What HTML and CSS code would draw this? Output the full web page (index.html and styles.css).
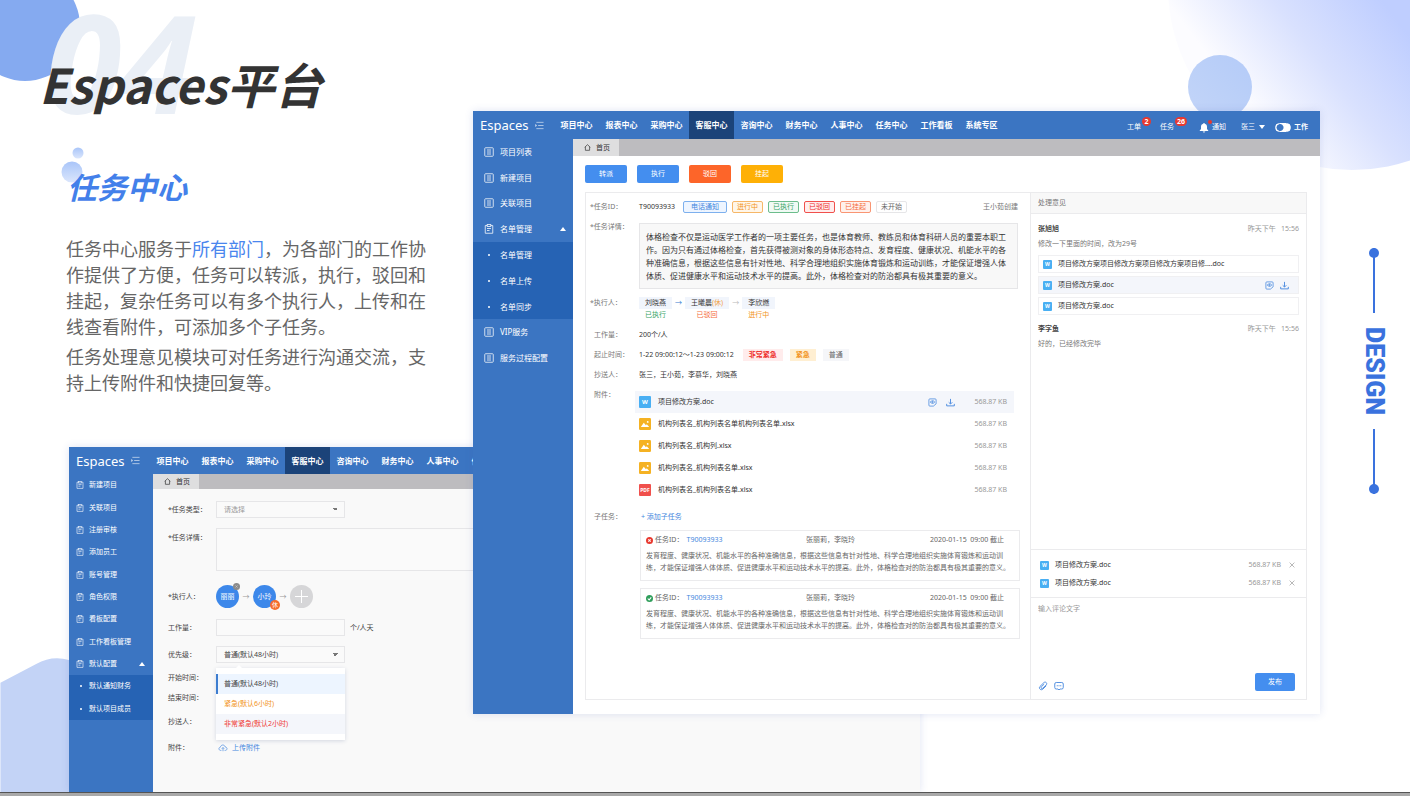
FILE: index.html
```html
<!DOCTYPE html>
<html lang="zh-CN">
<head>
<meta charset="utf-8">
<meta name="viewport" content="width=device-width, initial-scale=1">
<title>Espaces平台 - 任务中心</title>
<link rel="stylesheet" href="styles.css">
</head>
<body>
<svg class="sprite" aria-hidden="true">
  <symbol id="i-list" viewBox="0 0 20 20"><g fill="none" stroke="currentColor" stroke-width="1.8"><rect x="1.5" y="1.5" width="17" height="17" rx="1.5"/><path d="M6 6h8M6 10h8M6 14h8"/></g></symbol>
  <symbol id="i-board" viewBox="0 0 20 20"><g fill="none" stroke="currentColor" stroke-width="1.8"><path d="M6 3H2.500v15.500h15V3H14"/><rect x="6.500" y="1" width="7" height="4"/><path d="M6 9h8M6 13h5"/></g></symbol>
  <symbol id="i-fold" viewBox="0 0 20 20"><path d="M3 3h16M7 10h12M3 17h16M1 8l3 2-3 2z" fill="none" stroke="currentColor" stroke-width="1.800"/></symbol>
  <symbol id="i-home" viewBox="0 0 20 20"><path d="M2 9.500 10 2l8 7.500M4 8v10h12V8" fill="none" stroke="currentColor" stroke-width="2"/></symbol>
  <symbol id="i-bell" viewBox="0 0 20 20"><path d="M10 1c1 0 1.600.6 1.600 1.500C14.500 3.300 16 5.500 16 8.500V13l2.500 3v1h-17v-1L4 13V8.500c0-3 1.500-5.200 4.400-6C8.400 1.600 9 1 10 1zM7.500 18h5a2.500 2.200 0 0 1-5 0z" fill="currentColor"/></symbol>
  <symbol id="i-view" viewBox="0 0 20 20"><g fill="none" stroke="currentColor" stroke-width="1.700"><path d="M12 18H4a2 2 0 0 1-2-2V4a2 2 0 0 1 2-2h12a2 2 0 0 1 2 2v9z"/><path d="M5 9c2.500-4 7.500-4 10 0-2.500 4-7.500 4-10 0z"/><circle cx="10" cy="9" r="1.300"/></g></symbol>
  <symbol id="i-down" viewBox="0 0 20 20"><path d="M10 2v11M6 9.500l4 4 4-4M1.500 13v4.500h17V13" fill="none" stroke="currentColor" stroke-width="2"/></symbol>
  <symbol id="i-photo" viewBox="0 0 20 20"><rect width="20" height="20" rx="2" fill="#f5b223"/><path d="M3 15l5-7 3.500 4L13 10.500l4 4.500z" fill="#fff"/><circle cx="14.500" cy="6.500" r="1.500" fill="#fff"/></symbol>
  <symbol id="i-no" viewBox="0 0 20 20"><circle cx="10" cy="10" r="10" fill="#e8392f"/><path d="M6.500 6.500l7 7M13.500 6.500l-7 7" stroke="#fff" stroke-width="3"/></symbol>
  <symbol id="i-ok" viewBox="0 0 20 20"><circle cx="10" cy="10" r="10" fill="#2f9e5b"/><path d="M5 10l4 4 6-7" fill="none" stroke="#fff" stroke-width="3"/></symbol>
  <symbol id="i-x" viewBox="0 0 20 20"><path d="M2 2l16 16M18 2L2 18" stroke="currentColor" stroke-width="2"/></symbol>
  <symbol id="i-clip" viewBox="0 0 20 20"><path d="M16.500 9.500l-6.800 6.800c-3.900 3.600-9.300-1.600-5.700-5.400l7.800-7.700c3.400-2.900 7.600 1.400 4.700 4.600l-7 6.800c-2.300 1.700-4.600-.8-2.800-2.900l5.600-5.500" fill="none" stroke="currentColor" stroke-width="1.800"/></symbol>
  <symbol id="i-chat" viewBox="0 0 20 20"><path d="M4.500 3h11Q18.500 3 18.500 6v7q0 3-3 3H12l-2 2-2-2H4.500q-3 0-3-3V6q0-3 3-3z" fill="none" stroke="currentColor" stroke-width="1.800"/><path d="M5.500 9.500h2M9 9.500h2M12.500 9.500h2" stroke="currentColor" stroke-width="2"/></symbol>
  <symbol id="i-cloud" viewBox="0 0 24 20"><path d="M8 16H6C.5 15.500.5 8.500 5.500 8 6.500 1 16 .5 17.500 7.500c6 .5 6 8 .5 8.500h-2M12 18V9M8.800 12 12 8.800l3.200 3.200" fill="none" stroke="currentColor" stroke-width="1.700"/></symbol>
</svg>

<main class="slide">
  <svg class="decor decor-tl" viewBox="0 0 80 82" aria-hidden="true"><circle cx="25" cy="26" r="55" fill="#85aaf0"/></svg>
  <svg class="decor decor-tr" viewBox="0 0 242 172" aria-hidden="true">
    <defs><linearGradient id="sky" gradientUnits="userSpaceOnUse" x1="225" y1="15" x2="90" y2="120"><stop offset="0" stop-color="#bfceff"/><stop offset="0.500" stop-color="#d9e1fe"/><stop offset="1" stop-color="#fcfcff"/></linearGradient>
    <linearGradient id="ball" x1="1" y1="0" x2="0" y2="1"><stop offset="0" stop-color="#b4cbf8"/><stop offset="1" stop-color="#c3d5f8"/></linearGradient></defs>
    <circle cx="184" cy="-14" r="184" fill="url(#sky)"/>
    <circle cx="52" cy="87" r="32" fill="url(#ball)"/>
  </svg>
  <svg class="decor decor-bl" viewBox="0 0 120 136" aria-hidden="true"><path d="M0 25 36 6Q52-3 69 2L120 20V136H0z" fill="#c3d3f6"/></svg>
  <span class="big-number" aria-hidden="true">04</span>

  <section class="intro">
    <h1 class="intro-title">Espaces平台</h1>
    <h2 class="intro-sub">
      <svg class="bubbles" viewBox="0 0 24 36" aria-hidden="true"><defs><linearGradient id="bub" x1="0" y1="0" x2="0" y2="1"><stop offset="0" stop-color="#a9c5f9"/><stop offset="1" stop-color="#dbe6fc"/></linearGradient></defs><circle cx="17" cy="6" r="5.500" fill="url(#bub)"/><circle cx="11" cy="25" r="10.500" fill="url(#bub)"/></svg>
      <span class="intro-sub-text">任务中心</span>
    </h2>
    <p class="intro-text">任务中心服务于<em class="intro-key">所有部门</em>，为各部门的工作协作提供了方便，任务可以转派，执行，驳回和挂起，复杂任务可以有多个执行人，上传和在线查看附件，可添加多个子任务。</p>
    <p class="intro-text">任务处理意见模块可对任务进行沟通交流，支持上传附件和快捷回复等。</p>
  </section>

  <section class="window window-form">
    <header class="topbar">
      <span class="logo">Espaces</span><svg class="fold"><use href="#i-fold"/></svg>
      <nav class="topnav"><a href="#">项目中心</a><a href="#">报表中心</a><a href="#">采购中心</a><a href="#" class="active">客服中心</a><a href="#">咨询中心</a><a href="#">财务中心</a><a href="#">人事中心</a><a href="#">任务中心</a></nav>
    </header>
    <div class="window-body">
      <nav class="sidebar"><ul class="side-list">
        <li><a href="#"><svg class="ico"><use href="#i-board"/></svg>新建项目</a></li>
        <li><a href="#"><svg class="ico"><use href="#i-board"/></svg>关联项目</a></li>
        <li><a href="#"><svg class="ico"><use href="#i-board"/></svg>注册审核</a></li>
        <li><a href="#"><svg class="ico"><use href="#i-board"/></svg>添加员工</a></li>
        <li><a href="#"><svg class="ico"><use href="#i-board"/></svg>账号管理</a></li>
        <li><a href="#"><svg class="ico"><use href="#i-board"/></svg>角色权限</a></li>
        <li><a href="#"><svg class="ico"><use href="#i-board"/></svg>看板配置</a></li>
        <li><a href="#"><svg class="ico"><use href="#i-board"/></svg>工作看板管理</a></li>
        <li><a href="#"><svg class="ico"><use href="#i-board"/></svg>默认配置<i class="tri-up"></i></a></li>
        <li class="sub"><a href="#"><i class="dot"></i>默认通知财务</a></li>
        <li class="sub"><a href="#"><i class="dot"></i>默认项目成员</a></li>
      </ul></nav>
      <div class="content">
        <div class="tabs"><a href="#" class="tab"><svg class="home"><use href="#i-home"/></svg>首页</a></div>
        <form class="form">
          <div class="field"><label for="type">*任务类型：</label><select id="type" class="box muted"><option>请选择</option></select></div>
          <div class="field field-top"><label for="detail">*任务详情：</label><textarea id="detail" class="box area"></textarea></div>
          <div class="field field-people"><span class="field-name">*执行人：</span>
            <span class="avatar">丽丽<i class="avatar-close"><svg><use href="#i-x"/></svg></i></span><i class="arrow">→</i>
            <span class="avatar">小玲<i class="avatar-rest">休</i></span><i class="arrow">→</i>
            <button type="button" class="avatar avatar-add" aria-label="添加执行人"></button></div>
          <div class="field"><label for="amount">工作量：</label><input id="amount" class="box" type="text"><span class="unit">个/人天</span></div>
          <div class="field field-level"><label for="level">优先级：</label>
            <div class="picker"><select id="level" class="box"><option>普通(默认48小时)</option></select>
              <ul class="menu"><li class="chosen">普通(默认48小时)</li><li class="warn">紧急(默认6小时)</li><li class="danger">非常紧急(默认2小时)</li></ul></div></div>
          <div class="field field-line"><span class="field-name">开始时间：</span></div>
          <div class="field field-line"><span class="field-name">结束时间：</span></div>
          <div class="field field-wide"><span class="field-name">抄送人：</span></div>
          <div class="field field-wide"><span class="field-name">附件：</span><a href="#" class="upload"><svg><use href="#i-cloud"/></svg>上传附件</a></div>
        </form>
      </div>
    </div>
  </section>

  <section class="window window-task">
    <header class="topbar">
      <span class="logo">Espaces</span><svg class="fold"><use href="#i-fold"/></svg>
      <nav class="topnav"><a href="#">项目中心</a><a href="#">报表中心</a><a href="#">采购中心</a><a href="#" class="active">客服中心</a><a href="#">咨询中心</a><a href="#">财务中心</a><a href="#">人事中心</a><a href="#">任务中心</a><a href="#">工作看板</a><a href="#">系统专区</a></nav>
      <div class="account">
        <a href="#" class="counter">工单<b class="badge">2</b></a>
        <a href="#" class="counter">任务<b class="badge">26</b></a>
        <a href="#" class="notice"><svg><use href="#i-bell"/></svg>通知<i class="red-dot"></i></a>
        <a href="#" class="user">张三<i class="tri-down"></i></a>
        <label class="switch"><input type="checkbox">工作</label>
      </div>
    </header>
    <div class="window-body">
      <nav class="sidebar"><ul class="side-list">
        <li><a href="#"><svg class="ico"><use href="#i-list"/></svg>项目列表</a></li>
        <li><a href="#"><svg class="ico"><use href="#i-list"/></svg>新建项目</a></li>
        <li><a href="#"><svg class="ico"><use href="#i-list"/></svg>关联项目</a></li>
        <li><a href="#"><svg class="ico"><use href="#i-board"/></svg>名单管理<i class="tri-up"></i></a></li>
        <li class="sub"><a href="#"><i class="dot"></i>名单管理</a></li>
        <li class="sub"><a href="#"><i class="dot"></i>名单上传</a></li>
        <li class="sub"><a href="#"><i class="dot"></i>名单同步</a></li>
        <li><a href="#"><svg class="ico"><use href="#i-list"/></svg>VIP服务</a></li>
        <li><a href="#"><svg class="ico"><use href="#i-list"/></svg>服务过程配置</a></li>
      </ul></nav>
      <div class="content">
        <div class="tabs"><a href="#" class="tab"><svg class="home"><use href="#i-home"/></svg>首页</a></div>
        <div class="actions"><button class="btn">转派</button><button class="btn">执行</button><button class="btn btn-red">驳回</button><button class="btn btn-amber">挂起</button></div>
        <div class="panel">
          <div class="task">
            <div class="row"><span class="name star">*任务ID：</span><div class="value line">
              <span class="task-id">T90093933</span><span class="tag tag-blue">电话通知</span><span class="tag tag-orange">进行中</span><span class="tag tag-green">已执行</span><span class="tag tag-red">已驳回</span><span class="tag tag-coral">已挂起</span><span class="tag">未开始</span><span class="creator">王小茹创建</span></div></div>
            <div class="row"><span class="name star">*任务详情：</span><div class="value"><p class="detail">体格检查不仅是运动医学工作者的一项主要任务，也是体育教师、教练员和体育科研人员的重要本职工作。因为只有通过体格检查，首先获得被测对象的身体形态特点、发育程度、健康状况、机能水平的各种准确信息，根据这些信息有针对性地、科学合理地组织实施体育锻炼和运动训练，才能保证增强人体体质、促进健康水平和运动技术水平的提高。此外，体格检查对的防治都具有极其重要的意义。</p></div></div>
            <div class="row"><span class="name star">*执行人：</span><div class="value line">
              <span class="person"><b>刘晓燕</b><i class="green">已执行</i></span><i class="step step-on">→</i>
              <span class="person"><b>王曦晨<em>(休)</em></b><i class="coral">已驳回</i></span><i class="step">→</i>
              <span class="person"><b>李欣燃</b><i class="orange">进行中</i></span></div></div>
            <div class="row"><span class="name">工作量：</span><div class="value">200个/人</div></div>
            <div class="row"><span class="name">起止时间：</span><div class="value line"><span class="period">1-22 09:00:12～1-23 09:00:12</span><span class="level level-red">非常紧急</span><span class="level level-orange">紧急</span><span class="level">普通</span></div></div>
            <div class="row"><span class="name">抄送人：</span><div class="value">张三，王小茹，李慕华，刘晓燕</div></div>
            <div class="row"><span class="name">附件：</span><ul class="value files">
              <li class="hot"><i class="doc doc-w">W</i><span>项目修改方案.doc</span><svg class="act"><use href="#i-view"/></svg><svg class="act"><use href="#i-down"/></svg><span class="size">568.87 KB</span></li>
              <li><svg class="doc"><use href="#i-photo"/></svg><span>机构列表名_机构列表名单机构列表名单.xlsx</span><span class="size">568.87 KB</span></li>
              <li><svg class="doc"><use href="#i-photo"/></svg><span>机构列表名_机构列.xlsx</span><span class="size">568.87 KB</span></li>
              <li><svg class="doc"><use href="#i-photo"/></svg><span>机构列表名_机构列表名单.xlsx</span><span class="size">568.87 KB</span></li>
              <li><i class="doc doc-pdf">PDF</i><span>机构列表名_机构列表名单.xlsx</span><span class="size">568.87 KB</span></li>
            </ul></div>
            <div class="row"><span class="name">子任务：</span><div class="value">
              <a href="#" class="add">+ 添加子任务</a>
              <article class="card"><header><svg><use href="#i-no"/></svg><span>任务ID：</span><a href="#">T90093933</a><span class="who">张丽莉，李晓玲</span><time>2020-01-15&nbsp; 09:00 截止</time></header>
                <p>发育程度、健康状况、机能水平的各种准确信息，根据这些信息有针对性地、科学合理地组织实施体育锻炼和运动训<br>练，才能保证增强人体体质、促进健康水平和运动技术水平的提高。此外，体格检查对的防治都具有极其重要的意义。</p></article>
              <article class="card"><header><svg><use href="#i-ok"/></svg><span>任务ID：</span><a href="#">T90093933</a><span class="who">张丽莉，李晓玲</span><time>2020-01-15&nbsp; 09:00 截止</time></header>
                <p>发育程度、健康状况、机能水平的各种准确信息，根据这些信息有针对性地、科学合理地组织实施体育锻炼和运动训<br>练，才能保证增强人体体质、促进健康水平和运动技术水平的提高。此外，体格检查对的防治都具有极其重要的意义。</p></article>
            </div></div>
          </div>
          <aside class="opinion">
            <h3 class="opinion-title">处理意见</h3>
            <div class="messages">
              <article class="message"><header><b>张旭旭</b><time>昨天下午&nbsp;&nbsp; 15:56</time></header><p>修改一下里面的时间，改为29号</p>
                <ul class="docs"><li><i class="doc-s">W</i>项目修改方案项目修改方案项目修改方案项目修....doc</li>
                <li class="hot"><i class="doc-s">W</i>项目修改方案.doc<span class="acts"><svg class="act"><use href="#i-view"/></svg><svg class="act"><use href="#i-down"/></svg></span></li>
                <li><i class="doc-s">W</i>项目修改方案.doc</li></ul></article>
              <article class="message"><header><b>李字鱼</b><time>昨天下午&nbsp;&nbsp; 15:56</time></header><p>好的，已经修改完毕</p></article>
            </div>
            <ul class="pending">
              <li><i class="doc-s">W</i>项目修改方案.doc<span class="size">568.87 KB</span><button aria-label="移除"><svg><use href="#i-x"/></svg></button></li>
              <li><i class="doc-s">W</i>项目修改方案.doc<span class="size">568.87 KB</span><button aria-label="移除"><svg><use href="#i-x"/></svg></button></li>
            </ul>
            <div class="reply">
              <textarea placeholder="输入评论文字" aria-label="输入评论文字"></textarea>
              <div class="reply-bar"><svg><use href="#i-clip"/></svg><svg><use href="#i-chat"/></svg><button class="btn btn-send">发布</button></div>
            </div>
          </aside>
        </div>
      </div>
    </div>
  </section>

  <div class="rail"><span class="rail-line rail-start"></span><span class="rail-text">DESIGN</span><span class="rail-line rail-end"></span></div>
</main>
</body>
</html>
```
FILE: styles.css
```css
* { box-sizing: border-box; }
body { margin: 0; background: #fff; color: #555; font-family: "Noto Sans", "Noto Sans CJK SC", sans-serif; }
ul, p, h1, h2, h3 { margin: 0; padding: 0; font-weight: 400; }
ul { list-style: none; }
a { color: inherit; text-decoration: none; }
i, em { font-style: normal; }
button, input, select, textarea { font: inherit; color: inherit; margin: 0; }
button { border: 0; padding: 0; background: none; cursor: pointer; }
svg { flex: none; }
.sprite { position: absolute; width: 0; height: 0; }

.slide { position: relative; min-height: 100vh; overflow: hidden; border-bottom: 3px solid #a9a9a9; background: #fff; }
.slide::after { content: ""; position: absolute; left: 0; right: 0; bottom: 0; height: 1px; background: #555; }
.decor { position: absolute; }
.decor-tl { left: 0; top: 0; width: 80px; height: 82px; }
.decor-tr { right: 0; top: 0; width: 242px; height: 172px; }
.decor-bl { left: 0; bottom: 0; width: 120px; height: 135px; }
.big-number { position: absolute; left: 46px; top: 12px; font: italic 700 137px/98px "Noto Sans", sans-serif; color: #eaeff6; }

.intro { position: relative; width: 428px; padding: 50px 0 0 39px; }
.intro-title { font: italic 700 48px/66px "Noto Sans CJK SC", sans-serif; color: #333; white-space: nowrap; }
.intro-sub { position: relative; margin-top: 48px; padding-left: 28px; font: italic 700 30px/44px "Noto Sans CJK SC", sans-serif; color: #4380ea; }
.bubbles { position: absolute; left: 22px; top: -17px; width: 24px; height: 36px; }
.intro-sub-text { position: relative; }
.intro-text { margin: 0 0 4px 27px; font: 400 18px/26px "Noto Sans CJK SC", sans-serif; color: #666; }
.intro-sub + .intro-text { margin-top: 27px; }
.intro-key { color: #4a86ee; }

.window { position: absolute; display: flex; flex-direction: column; background: #fff; box-shadow: 0 0 8px rgba(60, 90, 180, 0.160); font-size: 7px; line-height: 12px; }
.window-form { left: 69px; right: 490px; top: 447px; bottom: 1px; background: #f9f9f9; }
.window-task { left: 473px; right: 90px; top: 111px; }
.topbar { display: flex; align-items: center; height: 28px; flex: none; padding-left: 7px; background: #3b75c2; color: #fff; }
.window-form .topbar { height: 27px; overflow: hidden; }
.logo { width: 48px; font-size: 13px; line-height: 20px; }
.fold { width: 9px; height: 9px; margin-left: 7px; opacity: 0.700; }
.topnav { display: flex; align-self: stretch; margin-left: 10px; }
.topnav a { display: flex; align-items: center; justify-content: center; width: 45px; font-size: 8px; font-weight: 700; white-space: nowrap; }
.topnav .active { background: #1b4379; }
.account { display: flex; align-items: center; margin: 4px 12px 0 auto; white-space: nowrap; }
.counter { position: relative; margin-right: 19px; }
.badge { position: absolute; left: 15px; top: -4px; min-width: 9px; padding: 0 2px; border-radius: 5px; background: #e8392f; font-size: 7px; line-height: 9px; text-align: center; }
.notice { position: relative; display: flex; align-items: center; gap: 3px; margin: 0 15px 0 6px; }
.notice svg { width: 10px; height: 11px; }
.red-dot { position: absolute; left: 9px; top: -1px; width: 4px; height: 4px; border-radius: 50%; background: #e8392f; }
.user { display: flex; align-items: center; gap: 4px; margin-right: 10px; }
.tri-down { border: 3px solid transparent; border-top: 4px solid currentColor; border-bottom: 0; }
.tri-up { margin-left: auto; border: 3px solid transparent; border-bottom: 4px solid currentColor; border-top: 0; }
.switch { display: flex; align-items: center; gap: 3px; font-weight: 700; }
.switch input { appearance: none; width: 16px; height: 9px; border: 1px solid #fff; border-radius: 5px; background: radial-gradient(circle at 4px 50%, #3b75c2 3px, #fff 4px); }

.window-body { display: flex; flex: 1; }
.sidebar { width: 100px; flex: none; background: #3b75c2; color: #fff; font-size: 8px; }
.side-list { display: grid; grid-auto-rows: 1fr; height: 232px; }
.sidebar a { display: flex; align-items: center; height: 100%; padding: 0 7px 0 11px; white-space: nowrap; }
.ico { width: 10px; height: 10px; margin-right: 6px; opacity: 0.850; }
.sub { background: #2663b4; }
.dot { width: 2px; height: 2px; margin: 0 10px 0 4px; border-radius: 50%; background: #fff; }
.window-form .sidebar { width: 84px; font-size: 7px; }
.window-form .side-list { height: 246px; }
.window-form .sidebar a { padding: 0 8px 0 7px; }
.window-form .ico { width: 8px; height: 8px; margin-right: 5px; }
.window-form .dot { margin: 0 7px 0 4px; }
.content { flex: 1; min-width: 0; }
.tabs { display: flex; height: 17px; background: #bdbcbf; }
.window-form .tabs { height: 15px; }
.tab { display: flex; align-items: center; gap: 5px; width: 46px; padding-left: 11px; background: #dededf; color: #333; }
.home { width: 7px; height: 7px; }

.form { padding: 12px 0 0 15px; color: #444; }
.field { display: flex; align-items: center; margin-bottom: 10px; }
.field label, .field-name { width: 48px; flex: none; }
.box { width: 129px; height: 17px; padding: 0 8px; border: 1px solid #e6e6e8; border-radius: 0; background: #fafafa; outline: 0; }
select.box { display: block; appearance: none; padding: 0 7px; background: linear-gradient(to top right, transparent 50%, #777 50%) 115px 6px / 3px 3px no-repeat, linear-gradient(to top left, transparent 50%, #777 50%) 118px 6px / 3px 3px no-repeat #fafafa; }
select.muted { color: #999; }
.field-top { align-items: flex-start; }
.field-top label { padding-top: 4px; }
.area { width: auto; flex: 1; height: 43px; resize: none; }
.field-people { margin: 14px 0 11px; }
.avatar { position: relative; display: flex; align-items: center; justify-content: center; width: 23px; height: 23px; border-radius: 50%; background: #3d88ea; color: #fff; }
.avatar-close { position: absolute; right: -1px; top: -2px; display: flex; align-items: center; justify-content: center; width: 7px; height: 7px; border-radius: 50%; background: #8b8b8b; }
.avatar-close svg { width: 3px; height: 3px; }
.avatar-rest { position: absolute; right: -4px; bottom: -2px; width: 10px; height: 10px; border-radius: 50%; background: #f56b2a; font-size: 6px; line-height: 10px; text-align: center; }
.arrow { width: 14px; text-align: center; color: #999; }
.avatar-add { background: linear-gradient(#fff, #fff) center / 13px 1px no-repeat, linear-gradient(#fff, #fff) center / 1px 13px no-repeat #d6d6d8; }
.unit { margin-left: 5px; }
.field-level { margin-bottom: 5px; }
.picker { position: relative; }
.menu { position: absolute; left: 0; top: 22px; width: 129px; padding: 6px 0; background: #fff; box-shadow: 0 1px 4px rgba(60, 80, 130, 0.200); }
.menu::before { content: ""; position: absolute; left: 20px; top: -3px; border: 3px solid transparent; border-top: 0; border-bottom-color: #fff; }
.menu li { padding: 0 8px; line-height: 20px; }
.menu .chosen { padding-left: 6px; border-left: 2px solid #3d7dd0; background: #edf5ff; }
.warn { color: #f29423; }
.menu .danger { background: #f4f6fb; color: #f03a35; }
.field-line { margin: 0; height: 20px; }
.field-wide { margin: 1px 0 0; height: 25px; }
.upload { display: flex; align-items: center; gap: 4px; margin-left: 2px; color: #4587de; }
.upload svg { width: 10px; height: 8px; }

.actions { display: flex; gap: 10px; padding: 9px 12px; }
.btn { width: 42px; height: 18px; border-radius: 2px; background: #448eef; color: #fff; font-size: 7px; }
.btn-red { background: #fd6529; }
.btn-amber { background: #feb006; }
.panel { display: flex; min-height: 508px; margin: 0 13px 14px 12px; border: 1px solid #ebebed; }
.task { flex: 1; min-width: 0; padding: 8px 10px 0 4px; }
.row { display: flex; align-items: flex-start; margin-bottom: 8px; }
.name { width: 49px; flex: none; padding-left: 4px; color: #777; white-space: nowrap; }
.star { padding-left: 0; }
.value { flex: 1; min-width: 0; color: #333; }
.line { display: flex; align-items: flex-start; white-space: nowrap; }
.task-id { width: 44px; }
.tag { margin-right: 5px; padding: 0 6px; border: 1px solid #e6e6e8; border-radius: 2px; line-height: 10px; color: #666; }
.tag + .tag { padding: 0 4px; }
.tag-blue { padding: 0 7px; border-color: #7db0ee; background: #eef5ff; color: #4587de; }
.tag-orange { border-color: #f6b768; background: #fff6e9; color: #f29423; }
.tag-green { border-color: #6cbd8c; background: #f0faf4; color: #35a465; }
.tag-red { border-color: #f0504c; background: #ffeded; color: #ee2e2a; }
.tag-coral { border-color: #f99573; background: #fff1ec; color: #f56b3d; }
.creator { margin: 0 2px 0 auto; color: #777; }
.detail { margin-top: 2px; margin-right: 2px; padding: 6px 5px 6px 6px; border: 1px solid #e6e6e8; background: #f8f8f8; font-size: 8px; line-height: 13px; }
.person { display: flex; flex-direction: column; align-items: center; }
.person b { padding: 0 6px; background: #f1f5fc; font-weight: 400; }
.person em { color: #f2a44a; }
.green { color: #35a465; }
.coral { color: #f56b3d; }
.orange { color: #f29423; }
.step { width: 13px; text-align: center; color: #bbb; }
.step-on { color: #3d7dd0; }
.period { margin-right: 9px; }
.level { margin-right: 7px; padding: 0 6px; background: #f5f6f9; color: #666; }
.level-red { background: #ffecec; color: #ee2e2a; font-weight: 700; }
.level-orange { background: #ffefd2; color: #f29423; font-weight: 700; }
.files { margin: 2px 6px 2px -4px; }
.files li { display: flex; align-items: center; height: 22px; padding: 0 7px 0 4px; }
.files .hot, .docs .hot { background: #f4f6fb; }
.doc { width: 12px; height: 12px; margin-right: 7px; }
.doc-w, .doc-pdf, .doc-s { border-radius: 1px; background: #49aff3; color: #fff; text-align: center; font-size: 6px; font-weight: 700; }
.doc-pdf { background: #f0504c; font-size: 5px; }
.doc-s { width: 9px; height: 9px; margin-right: 6px; font-size: 5px; line-height: 9px; }
.act { width: 9px; height: 9px; color: #4587de; }
.files .act { margin-right: 9px; }
.files span + .act { margin-left: auto; }
.size { color: #999; }
.files span + .size { margin-left: auto; }
.files .act + .size { margin-left: 10px; }
.add { display: block; margin-left: 2px; color: #4587de; }
.card { margin: 7px 0 0 1px; padding: 3px 0 6px 5px; border: 1px solid #ebebed; color: #666; white-space: nowrap; }
.card header { display: flex; align-items: center; margin-bottom: 4px; }
.card header svg { width: 7px; height: 7px; margin-right: 2px; }
.card header a { margin-left: 3px; color: #4587de; }
.card .who { margin-left: auto; }
.card time { margin: 0 15px 0 75px; }

.opinion { display: flex; flex-direction: column; width: 276px; flex: none; border-left: 1px solid #ebebed; }
.opinion-title { padding: 4px 7px; border-bottom: 1px solid #ebebed; background: #f8f8f8; font-size: 7px; color: #777; }
.messages { flex: 1; padding: 9px 7px 0; }
.message { margin-bottom: 8px; color: #777; }
.message header { display: flex; justify-content: space-between; margin-bottom: 3px; }
.message b { color: #444; }
.message time { color: #999; }
.docs { display: grid; gap: 3px; margin-top: 5px; color: #333; }
.docs li, .pending li { display: flex; align-items: center; height: 18px; padding: 0 9px 0 4px; border: 1px solid #f0f0f2; }
.acts { display: flex; gap: 6px; margin-left: auto; }
.pending { padding: 6px 1px 5px 4px; border-top: 1px solid #ebebed; border-bottom: 1px solid #ebebed; color: #333; }
.pending li { border-color: transparent; }
.pending .size { margin-left: auto; }
.pending button { display: flex; margin-left: 8px; color: #888; }
.pending svg { width: 6px; height: 6px; }
.reply { display: flex; flex-direction: column; height: 101px; padding: 5px 11px 8px 7px; }
.reply textarea { display: block; flex: 1; padding: 0; border: 0; background: none; resize: none; outline: 0; }
.reply textarea::placeholder { color: #999; }
.reply-bar { display: flex; align-items: center; gap: 6px; }
.reply-bar svg { width: 10px; height: 10px; margin-top: 8px; color: #4587de; }
.btn-send { width: 40px; margin-left: auto; }

.rail { position: absolute; right: 25px; top: 248px; display: flex; flex-direction: column; align-items: center; gap: 14px; width: 22px; }
.rail-line { position: relative; width: 2px; height: 65px; background: #3a72de; }
.rail-line::before { content: ""; position: absolute; left: -4px; width: 10px; height: 10px; border-radius: 50%; background: #3a72de; }
.rail-start::before { top: 0; }
.rail-end::before { bottom: 0; }
.rail-text { writing-mode: vertical-rl; font: 900 25px/22px Roboto, sans-serif; color: #3a72de; }
```
